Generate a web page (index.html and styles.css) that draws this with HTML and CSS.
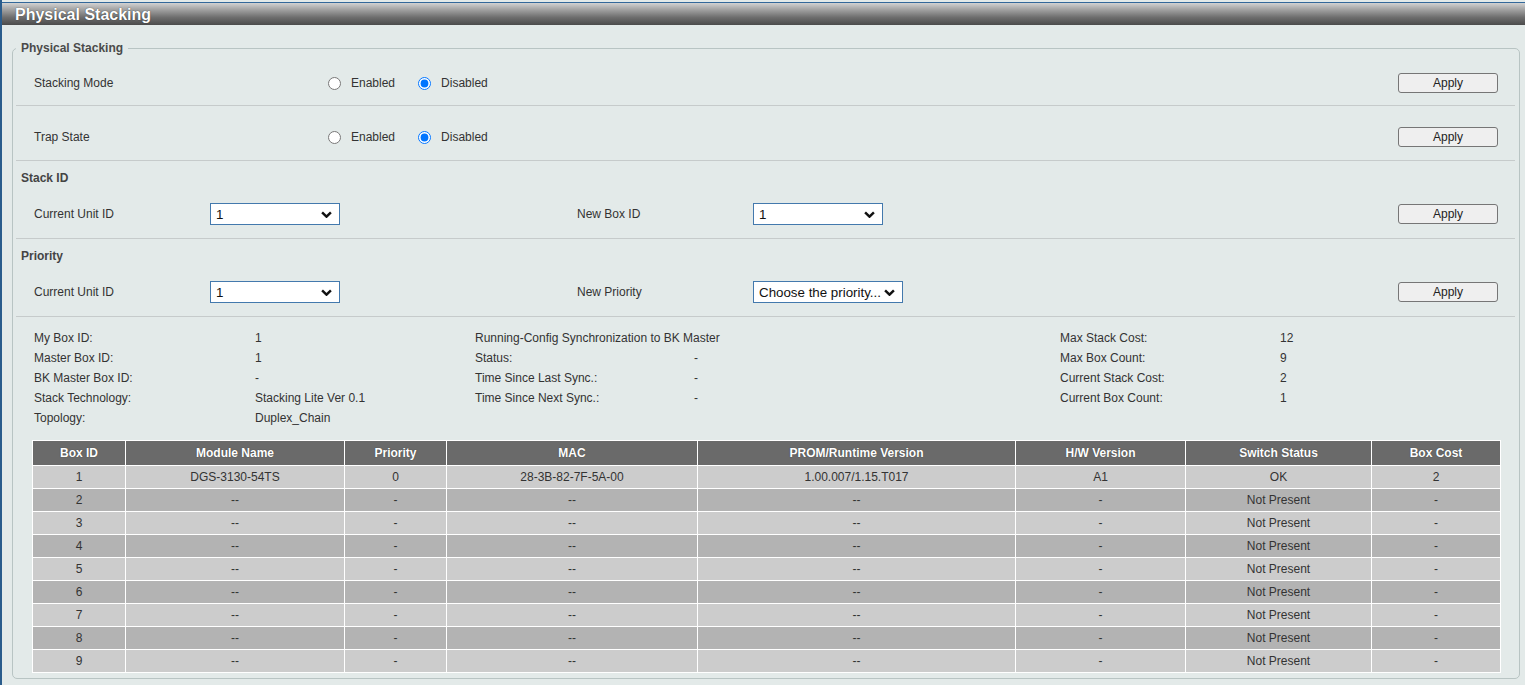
FILE: index.html
```html
<!DOCTYPE html>
<html>
<head>
<meta charset="utf-8">
<title>Physical Stacking</title>
<link rel="stylesheet" href="styles.css">
</head>
<body>
<div class="page">
  <div class="titlebar">Physical Stacking</div>
  <fieldset class="panel">
    <legend>Physical Stacking</legend>

    <div class="row row-first">
      <div class="label label-wide">Stacking Mode</div>
      <label class="opt"><input type="radio" name="mode"><span>Enabled</span></label>
      <label class="opt opt2"><input type="radio" name="mode" checked><span>Disabled</span></label>
      <button class="apply">Apply</button>
    </div>
    <div class="sep"></div>

    <div class="row">
      <div class="label label-wide">Trap State</div>
      <label class="opt"><input type="radio" name="trap"><span>Enabled</span></label>
      <label class="opt opt2"><input type="radio" name="trap" checked><span>Disabled</span></label>
      <button class="apply">Apply</button>
    </div>
    <div class="sep"></div>

    <div class="section">Stack ID</div>
    <div class="row row-sel">
      <div class="label">Current Unit ID</div>
      <span class="sel"><select><option>1</option></select><svg class="chev" viewBox="0 0 10 6" width="11" height="7"><path d="M1 1 L5 5 L9 1" fill="none" stroke="#111" stroke-width="2.2"/></svg></span>
      <div class="label label2">New Box ID</div>
      <span class="sel"><select><option>1</option></select><svg class="chev" viewBox="0 0 10 6" width="11" height="7"><path d="M1 1 L5 5 L9 1" fill="none" stroke="#111" stroke-width="2.2"/></svg></span>
      <button class="apply">Apply</button>
    </div>
    <div class="sep"></div>

    <div class="section">Priority</div>
    <div class="row row-sel">
      <div class="label">Current Unit ID</div>
      <span class="sel"><select><option>1</option></select><svg class="chev" viewBox="0 0 10 6" width="11" height="7"><path d="M1 1 L5 5 L9 1" fill="none" stroke="#111" stroke-width="2.2"/></svg></span>
      <div class="label label2">New Priority</div>
      <span class="sel sel-wide"><select><option>Choose the priority...</option></select><svg class="chev" viewBox="0 0 10 6" width="11" height="7"><path d="M1 1 L5 5 L9 1" fill="none" stroke="#111" stroke-width="2.2"/></svg></span>
      <button class="apply">Apply</button>
    </div>
    <div class="sep"></div>

    <div class="info">
      <div>My Box ID:</div><div>1</div><div class="span2">Running-Config Synchronization to BK Master</div><div>Max Stack Cost:</div><div>12</div>
      <div>Master Box ID:</div><div>1</div><div>Status:</div><div>-</div><div>Max Box Count:</div><div>9</div>
      <div>BK Master Box ID:</div><div>-</div><div>Time Since Last Sync.:</div><div>-</div><div>Current Stack Cost:</div><div>2</div>
      <div>Stack Technology:</div><div>Stacking Lite Ver 0.1</div><div>Time Since Next Sync.:</div><div>-</div><div>Current Box Count:</div><div>1</div>
      <div>Topology:</div><div>Duplex_Chain</div><div></div><div></div><div></div><div></div>
    </div>

    <table class="grid">
      <colgroup>
        <col style="width:93px"><col style="width:219px"><col style="width:102px"><col style="width:251px">
        <col style="width:318px"><col style="width:170px"><col style="width:186px"><col style="width:129px">
      </colgroup>
      <thead>
        <tr><th>Box ID</th><th>Module Name</th><th>Priority</th><th>MAC</th><th>PROM/Runtime Version</th><th>H/W Version</th><th>Switch Status</th><th>Box Cost</th></tr>
      </thead>
      <tbody>
        <tr><td>1</td><td>DGS-3130-54TS</td><td>0</td><td>28-3B-82-7F-5A-00</td><td>1.00.007/1.15.T017</td><td>A1</td><td>OK</td><td>2</td></tr>
        <tr><td>2</td><td>--</td><td>-</td><td>--</td><td>--</td><td>-</td><td>Not Present</td><td>-</td></tr>
        <tr><td>3</td><td>--</td><td>-</td><td>--</td><td>--</td><td>-</td><td>Not Present</td><td>-</td></tr>
        <tr><td>4</td><td>--</td><td>-</td><td>--</td><td>--</td><td>-</td><td>Not Present</td><td>-</td></tr>
        <tr><td>5</td><td>--</td><td>-</td><td>--</td><td>--</td><td>-</td><td>Not Present</td><td>-</td></tr>
        <tr><td>6</td><td>--</td><td>-</td><td>--</td><td>--</td><td>-</td><td>Not Present</td><td>-</td></tr>
        <tr><td>7</td><td>--</td><td>-</td><td>--</td><td>--</td><td>-</td><td>Not Present</td><td>-</td></tr>
        <tr><td>8</td><td>--</td><td>-</td><td>--</td><td>--</td><td>-</td><td>Not Present</td><td>-</td></tr>
        <tr><td>9</td><td>--</td><td>-</td><td>--</td><td>--</td><td>-</td><td>Not Present</td><td>-</td></tr>
      </tbody>
    </table>
  </fieldset>
</div>
</body>
</html>
```

FILE: styles.css
```css
html, body {
  margin: 0;
  padding: 0;
  background: #e3eae9;
  font-family: "Liberation Sans", Arial, sans-serif;
  font-size: 12px;
  color: #333;
}

.page {
  border-left: 2px solid #2a5c8c;
  min-height: 685px;
  box-sizing: border-box;
  overflow: hidden;
}

.titlebar {
  margin-top: 2px;
  border-top: 1px solid #33689a;
  height: 22px;
  line-height: 23px;
  padding-left: 13px;
  font-size: 16px;
  font-weight: bold;
  color: #fff;
  text-shadow: 0 0 1px #222;
  background: linear-gradient(#d2d2d2 0%, #a2a2a2 30%, #6e6e6e 65%, #4b4b4b 100%);
}

.panel {
  margin: 16px 5px 0 10px;
  padding: 0 4px 5px 3px;
  border: 1px solid #b8c4c3;
  border-radius: 5px;
  min-width: 0;
}

.panel legend {
  padding: 0 5px;
  font-weight: bold;
  color: #4a4a4a;
  line-height: 14px;
}

.row {
  display: flex;
  align-items: center;
  height: 20px;
  padding: 21px 0 13px 18px;
}

.row-first {
  padding-top: 18px;
  padding-bottom: 12px;
}

.row-sel {
  height: 22px;
  padding: 18px 0 13px 18px;
}

.label {
  width: 176px;
  flex: none;
}

.label-wide {
  width: 289px;
}

.label2 {
  margin-left: 237px;
}

.opt {
  display: flex;
  align-items: center;
}

.opt input {
  width: 13px;
  height: 13px;
  margin: 0 10px 0 5px;
}

.opt2 {
  margin-left: 23px;
}

.opt2 input {
  margin-left: 0;
}

.apply {
  margin-left: auto;
  margin-right: 17px;
  width: 100px;
  height: 20px;
  padding: 0;
  border: 1px solid #767676;
  border-radius: 3px;
  background: #efefef;
  font-family: "Liberation Sans", Arial, sans-serif;
  font-size: 12px;
  color: #222;
}

.sel {
  position: relative;
  flex: none;
  width: 130px;
  height: 22px;
}

.sel-wide {
  width: 150px;
}

.sel select {
  appearance: none;
  -webkit-appearance: none;
  box-sizing: border-box;
  width: 100%;
  height: 22px;
  margin: 0;
  padding: 0 0 0 5px;
  border: 1px solid #4379ad;
  border-radius: 0;
  background: #fff;
  font-family: "Liberation Sans", Arial, sans-serif;
  font-size: 13.33px;
  color: #111;
}

.sel .chev {
  position: absolute;
  right: 8px;
  top: 8px;
  pointer-events: none;
}

.sep {
  height: 1px;
  background: #c6cbcb;
}

.section {
  padding: 10px 0 0 5px;
  line-height: 14px;
  font-weight: bold;
  color: #444;
}

.info {
  display: grid;
  grid-template-columns: 221px 220px 219px 366px 220px 1fr;
  grid-auto-rows: 20px;
  align-items: center;
  padding: 11px 0 0 18px;
}

.info .span2 {
  grid-column: span 2;
}

.grid {
  margin: 12px 0 0 16px;
  width: 1468px;
  table-layout: fixed;
  border-collapse: collapse;
  text-align: center;
}

.grid th, .grid td {
  border: 1px solid #fff;
  padding: 0;
  overflow: hidden;
  white-space: nowrap;
}

.grid th {
  height: 24px;
  background: #6a6a6a;
  color: #fff;
  font-weight: bold;
  text-shadow: 0 0 1px #333;
}

.grid td {
  height: 22px;
  color: #333;
}

.grid tbody tr:nth-child(odd) td {
  background: #cccccc;
}

.grid tbody tr:nth-child(even) td {
  background: #b3b3b3;
}
```
